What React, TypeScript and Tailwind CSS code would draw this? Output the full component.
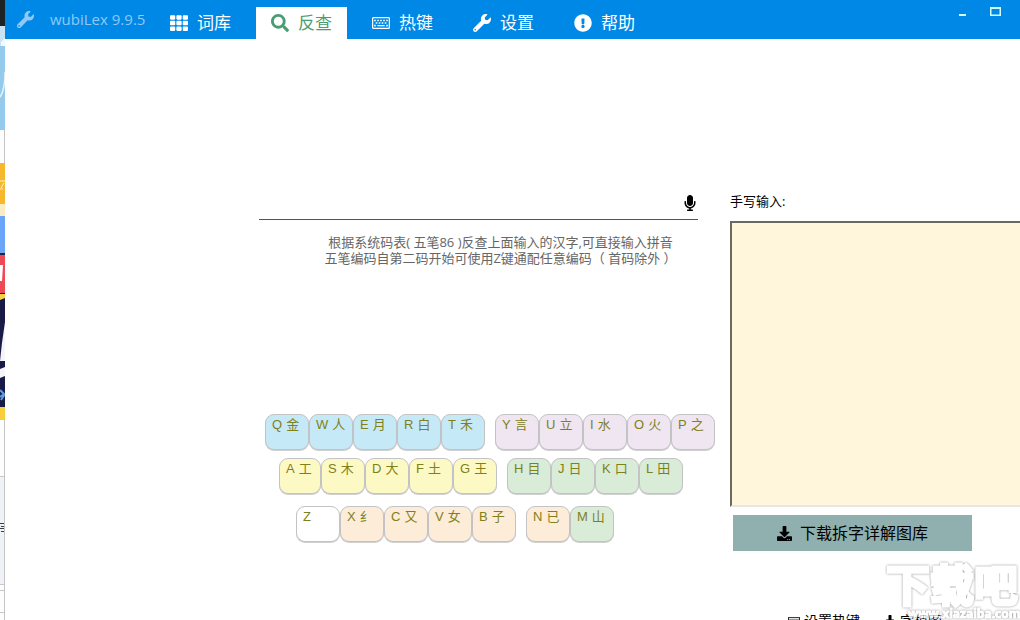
import { useState } from 'react';
import type { IconType } from 'react-icons';
import {
  FaDownload,
  FaExclamationCircle,
  FaMicrophone,
  FaRegKeyboard,
  FaSearch,
  FaTh,
  FaWrench,
} from 'react-icons/fa';

interface Tab {
  label: string;
  icon: IconType;
}

interface KeyCap {
  letter: string;
  root: string;
  color: string;
}

const tabs: Tab[] = [
  { label: '词库', icon: FaTh },
  { label: '反查', icon: FaSearch },
  { label: '热键', icon: FaRegKeyboard },
  { label: '设置', icon: FaWrench },
  { label: '帮助', icon: FaExclamationCircle },
];

const BLUE = 'w-11 bg-[#c6e9f8]';
const PINK = 'w-11 bg-[#f0e6f1]';
const YELLOW = 'w-11 bg-[#fdf9c4]';
const YELLOW_NARROW = 'w-[42px] bg-[#fdf9c4]';
const GREEN = 'w-11 bg-[#d9ecd8]';
const ORANGE = 'w-11 bg-[#fdecd7]';
const WHITE = 'w-11 bg-white';

function keys(pairs: string[], color: string): KeyCap[] {
  return pairs.map((pair) => ({ letter: pair[0], root: pair.slice(1), color }));
}

// Every row has a left-hand and a right-hand group
const keyRows = [
  {
    className: 'pl-1.5',
    groups: [keys(['Q金', 'W人', 'E月', 'R白', 'T禾'], BLUE), keys(['Y言', 'U立', 'I水', 'O火', 'P之'], PINK)],
  },
  {
    className: 'pl-5 pt-2',
    groups: [
      [...keys(['A工'], YELLOW_NARROW), ...keys(['S木', 'D大', 'F土', 'G王'], YELLOW)],
      keys(['H目', 'J日', 'K口', 'L田'], GREEN),
    ],
  },
  {
    className: 'pl-[37px] pt-3',
    groups: [
      [...keys(['Z'], WHITE), ...keys(['X纟', 'C又', 'V女', 'B子'], ORANGE)],
      [...keys(['N已'], ORANGE), ...keys(['M山'], GREEN)],
    ],
  },
];

// The bit of desktop that shows to the left of the window
function DesktopEdge() {
  return (
    <svg className="w-[5px] shrink-0" height="620" viewBox="0 0 5 620" preserveAspectRatio="none" aria-hidden="true">
      <rect width="5" height="620" fill="#fdfdfd" />
      <rect width="5" height="26" fill="#1d2224" />
      <rect y="26" width="5" height="20" fill="#c9e3f5" />
      <rect y="46" width="5" height="84" fill="#94cbec" />
      <path d="M1 42l4-4v8H1z" fill="#f2f9fd" />
      <path d="M5 72Q5 90 0 97" stroke="#e6f4fc" strokeWidth="1.5" fill="none" />
      <rect y="163" width="5" height="41" fill="#f6b92d" />
      <path d="M0 181h5M1 188l3-5M0 189h3" stroke="#fdf0cd" strokeWidth="1" />
      <rect y="204" width="5" height="12" fill="#fdebc4" />
      <rect y="216" width="5" height="37" fill="#6ba5fa" />
      <rect y="253" width="5" height="2" fill="#2a2444" />
      <rect y="255" width="5" height="38" fill="#ee4a56" />
      <path d="M0 265h3l-1 16H0z" fill="#ffffff" />
      <rect y="293" width="5" height="114" fill="#191a45" />
      <path d="M0 294h5v4l-5 2z" fill="#f7d04a" />
      <path d="M5 322v39H0l2-18z" fill="#f5f5fa" />
      <path d="M0 369l5-2v9L0 378z" fill="#f5f5fa" />
      <path d="M0 390l4 4-4 3M1 400l4-6" stroke="#5b9be8" strokeWidth="2" fill="none" />
      <rect y="407" width="5" height="12" fill="#f6cf3a" />
      <path d="M0 419.5h5M0 476.5h5M0 584.5h5M0 590.5h5M0 612.5h5" stroke="#c8c8c8" />
      <rect y="477" width="5" height="107" fill="#eff2f6" />
      <path d="M0 523.5h5M1 526.5h4M0 528.5h5M1 531.5h4M4.5 523v9" stroke="#3b3f46" />
      <path d="M4.5 130v33M4.5 420v200" stroke="#c4c4c4" />
    </svg>
  );
}

function TitleBar({ active, onSelect }: { active: string; onSelect: (label: string) => void }) {
  return (
    <header className="flex h-[39px] shrink-0 items-stretch bg-[#0088e6]">
      <div className="flex w-[150px] shrink-0 items-center pl-3 text-[#8fc9f6]">
        <FaWrench size={17} />
        <span className="ml-4 whitespace-nowrap text-[15px]">wubiLex 9.9.5</span>
      </div>
      <nav className="flex gap-2.5 pt-[7px]">
        {tabs.map(({ label, icon: Icon }) => (
          <button
            key={label}
            type="button"
            onClick={() => onSelect(label)}
            className={`flex items-center gap-[9px] px-[15px] text-[17px] ${
              label === active ? 'bg-white text-[#4a9d72]' : 'text-white'
            }`}
          >
            <Icon size={18} />
            <span className="whitespace-nowrap">{label}</span>
          </button>
        ))}
      </nav>
      <div className="ml-auto flex items-start text-[#d2fbf5]">
        <button type="button" aria-label="最小化" className="h-6 w-8">
          <svg width="32" height="24" viewBox="0 0 32 24">
            <path d="M11 15h7" stroke="currentColor" strokeWidth="2" />
          </svg>
        </button>
        <button type="button" aria-label="最大化" className="mr-2 h-6 w-8">
          <svg width="32" height="24" viewBox="0 0 32 24">
            <path d="M10 7h11v9H10zM11.5 9v5.5h8V9z" fill="currentColor" fillRule="evenodd" />
          </svg>
        </button>
      </div>
    </header>
  );
}

function Keyboard({ onPress }: { onPress: (letter: string) => void }) {
  return (
    <div>
      {keyRows.map((row, i) => (
        <div key={i} className={`flex gap-2.5 ${row.className}`}>
          {row.groups.map((group, j) => (
            <div key={j} className="flex">
              {group.map((k) => (
                <button
                  key={k.letter}
                  type="button"
                  onClick={() => onPress(k.letter)}
                  className={`flex h-9 items-start gap-1 rounded-[9px] border border-[#c3c3c6] pl-1.5 pt-0.5 font-['Liberation_Sans','Noto_Sans_CJK_SC',sans-serif] text-[13px] leading-4 text-[#80801a] shadow-[0_1px_0_#d0d0d2] ${k.color}`}
                >
                  <span>{k.letter}</span>
                  <span>{k.root}</span>
                </button>
              ))}
            </div>
          ))}
        </div>
      ))}
    </div>
  );
}

function Watermark() {
  return (
    <svg
      className="pointer-events-none absolute right-0 bottom-0 opacity-80 drop-shadow-[0_0_1px_#777777]"
      width="136"
      height="60"
      viewBox="0 0 136 60"
    >
      <g fill="#ffffff" stroke="#ffffff" fontWeight="700">
        <text x="2" y="42" fontSize="44" strokeWidth="3">
          下载吧
        </text>
        <text x="24" y="58" fontSize="12" strokeWidth="1">
          www.xiazaiba.com
        </text>
      </g>
    </svg>
  );
}

export default function App() {
  const [active, setActive] = useState('反查');
  const [query, setQuery] = useState('');

  return (
    <div className="relative flex h-screen overflow-hidden bg-white font-['Open_Sans','Noto_Sans_CJK_SC',sans-serif]">
      <DesktopEdge />
      <div className="flex min-w-0 flex-1 flex-col">
        <TitleBar active={active} onSelect={setActive} />
        <main className="flex min-h-0 flex-1 pl-[254px] pt-[148px]">
          <section className="w-[471px] shrink-0">
            <div className="mr-8 flex h-[33px] items-center border-b border-[#128012]">
              <input
                type="text"
                aria-label="反查"
                value={query}
                onChange={(e) => setQuery(e.target.value)}
                className="min-w-0 flex-1 bg-transparent text-base outline-none"
              />
              <button type="button" aria-label="语音输入">
                <FaMicrophone size={16} />
              </button>
            </div>
            <p className="mr-8 whitespace-nowrap pl-11 pt-3.5 text-center text-[13px] leading-4 text-[#666]">
              根据系统码表( 五笔86 )反查上面输入的汉字,可直接输入拼音
              <br />
              五笔编码自第二码开始可使用Z键通配任意编码（ 首码除外 ）
            </p>
            <div className="pt-[148px]">
              <Keyboard onPress={(letter) => setQuery(query + letter.toLowerCase())} />
            </div>
          </section>
          <section className="min-w-0 flex-1">
            <label htmlFor="handwriting" className="block pt-1.5 text-[13px] leading-4">
              手写输入:
            </label>
            <textarea
              id="handwriting"
              className="mt-3 block h-[286px] w-full resize-none border-2 border-r-0 border-[#6b6960] border-b-[#e6e6e6] bg-[#fff6dc] p-2 outline-none"
            />
            <button
              type="button"
              className="ml-[3px] mt-2 flex h-9 w-[239px] items-center justify-center gap-2 bg-[#8fb0ae] text-base"
            >
              <FaDownload size={15} />
              下载拆字详解图库
            </button>
            <div className="flex gap-6 whitespace-nowrap pt-[62px] pl-[58px] text-sm leading-4">
              <button type="button" className="flex items-center gap-1">
                <FaRegKeyboard size={12} />
                设置热键
              </button>
              <button type="button" className="flex items-center gap-1">
                <FaDownload size={12} />
                字根图
              </button>
            </div>
          </section>
        </main>
      </div>
      <Watermark />
    </div>
  );
}
